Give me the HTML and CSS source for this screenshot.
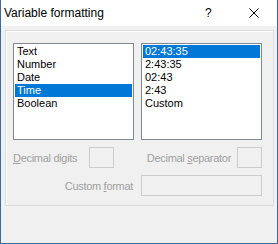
FILE: index.html
```html
<!DOCTYPE html>
<html lang="en">
<head>
  <meta charset="UTF-8" />
  <title>Variable formatting</title>
  <link rel="stylesheet" href="styles.css">
</head>
<body>
  <div class="window">
    <div class="titlebar">
      <span class="title">Variable formatting</span>
      <span class="help">?</span>
      <span class="close">
        <svg width="10" height="10" viewBox="0 0 10 10">
          <path d="M0.5 0.5 L9.5 9.5 M9.5 0.5 L0.5 9.5" stroke="#000" stroke-width="1" fill="none"/>
        </svg>
      </span>
    </div>

    <div class="group">
      <div class="lists">
        <div class="listbox">
          <div class="item">Text</div>
          <div class="item">Number</div>
          <div class="item">Date</div>
          <div class="item selected">Time</div>
          <div class="item">Boolean</div>
        </div>
        <div class="listbox">
          <div class="item selected">02:43:35</div>
          <div class="item">2:43:35</div>
          <div class="item">02:43</div>
          <div class="item">2:43</div>
          <div class="item">Custom</div>
        </div>
      </div>

      <div class="row">
        <span class="label digits-label"><u>D</u>ecimal digits</span>
        <span class="field small"></span>
        <span class="label sep-label">Decimal <u>s</u>eparator</span>
        <span class="field small"></span>
      </div>

      <div class="row end">
        <span class="label">Custom <u>f</u>ormat</span>
        <span class="field wide"></span>
      </div>
    </div>
  </div>
</body>
</html>
```

FILE: styles.css
```css
body {
  margin: 0;
  font-family: "Liberation Sans", Arial, sans-serif;
  font-size: 11px;
  color: #000;
}
.window {
  width: 278px;
  height: 244px;
  box-sizing: border-box;
  background: #f0f0f0;
  border: 1px solid #3b6b9c;
  border-top: none;
}
.titlebar {
  height: 26px;
  background: #fff;
  display: flex;
  align-items: center;
}
.title {
  font-size: 12px;
  padding-left: 3px;
  flex: 1;
}
.help {
  font-size: 12px;
  width: 12px;
  margin-right: 32px;
}
.close {
  display: flex;
  margin-right: 18px;
}
.group {
  width: 269px;
  height: 176px;
  box-sizing: border-box;
  margin: 4px 0 0 4px;
  padding: 12px 0 0 7px;
  border: 1px solid #dcdcdc;
  box-shadow: inset 1px 1px 0 #fff;
}
.lists {
  display: flex;
  gap: 7px;
}
.listbox {
  width: 121px;
  height: 97px;
  box-sizing: border-box;
  border: 1px solid #828790;
  background: #fff;
  padding: 1px;
}
.item {
  height: 13px;
  line-height: 13px;
  padding-left: 2px;
}
.item.selected {
  background: #0078d7;
  color: #fff;
}
.row {
  display: flex;
  align-items: center;
  margin-top: 7px;
  width: 249px;
}
.row.end {
  justify-content: flex-end;
  gap: 8px;
}
.label {
  color: #a0a0a0;
  letter-spacing: -0.3px;
}
.digits-label {
  width: 76px;
}
.sep-label {
  margin-left: auto;
  margin-right: 6px;
}
.field {
  height: 21px;
  box-sizing: border-box;
  border: 1px solid #cccccc;
  background: #f0f0f0;
}
.field.small {
  width: 25px;
}
.field.wide {
  width: 121px;
}
```
